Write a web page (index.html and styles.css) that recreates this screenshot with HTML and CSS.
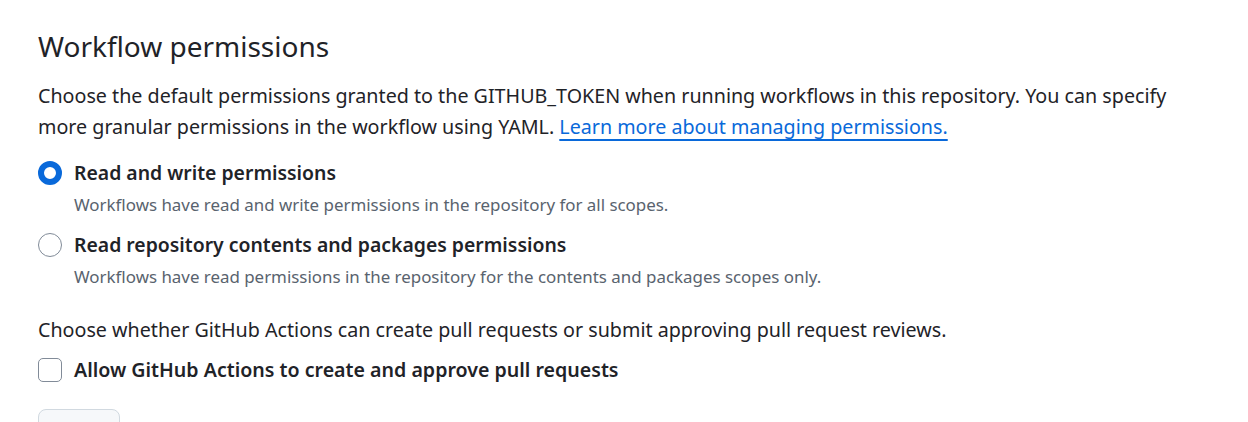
FILE: index.html
```html
<!DOCTYPE html>
<html>
<head>
<meta charset="utf-8">
<link rel="stylesheet" href="styles.css">
</head>
<body>
<main class="page">
  <h2 class="title">Workflow permissions</h2>
  <p class="intro">Choose the default permissions granted to the GITHUB_TOKEN when running workflows in this repository. You can specify more granular permissions in the workflow using YAML. <a class="link" href="#">Learn more about managing permissions.</a></p>

  <div class="options">
    <label class="option">
      <span class="radio radio-checked"></span>
      <span class="option-body">
        <span class="option-label">Read and write permissions</span>
        <span class="option-note">Workflows have read and write permissions in the repository for all scopes.</span>
      </span>
    </label>
    <label class="option">
      <span class="radio"></span>
      <span class="option-body">
        <span class="option-label">Read repository contents and packages permissions</span>
        <span class="option-note">Workflows have read permissions in the repository for the contents and packages scopes only.</span>
      </span>
    </label>
  </div>

  <p class="intro second">Choose whether GitHub Actions can create pull requests or submit approving pull request reviews.</p>

  <label class="check-row">
    <span class="checkbox"></span>
    <span class="option-label check-label">Allow GitHub Actions to create and approve pull requests</span>
  </label>

  <div class="actions">
    <button class="btn">Save</button>
  </div>
</main>
</body>
</html>
```

FILE: styles.css
```css
html, body {
  margin: 0;
  padding: 0;
  background: #ffffff;
}

body {
  font-family: "Noto Sans", "Open Sans", "Liberation Sans", sans-serif;
  color: #1f2328;
  overflow: hidden;
}

.page {
  padding: 24px 0 0 38px;
  width: 1145px;
}

.title {
  margin: 0;
  font-size: 28px;
  font-weight: 400;
  line-height: 44px;
}

.intro {
  margin: 12px 0 0 0;
  font-size: 19.7px;
  line-height: 31px;
}

.link {
  color: #0969da;
  text-decoration: underline;
  text-decoration-thickness: 2px;
  text-underline-offset: 5px;
}

.options {
  display: flex;
  flex-direction: column;
  gap: 8px;
  margin-top: 14px;
}

.option {
  display: flex;
  align-items: flex-start;
  gap: 12px;
}

.radio {
  flex: none;
  width: 24px;
  height: 24px;
  box-sizing: border-box;
  border-radius: 50%;
  border: 1px solid #818b98;
  margin-top: 5px;
}

.radio-checked {
  border: 6px solid #0969da;
}

.option-body {
  display: flex;
  flex-direction: column;
}

.option-label {
  font-size: 19.4px;
  font-weight: 600;
  line-height: 34px;
}

.check-label {
  font-size: 19.6px;
}

.option-note {
  font-size: 16.9px;
  line-height: 30px;
  color: #59636e;
}

.second {
  margin-top: 22px;
}

.check-row {
  display: flex;
  align-items: center;
  gap: 12px;
  margin-top: 8px;
}

.checkbox {
  flex: none;
  width: 24px;
  height: 24px;
  box-sizing: border-box;
  border: 1px solid #818b98;
  border-radius: 5px;
}

.actions {
  margin-top: 22px;
}

.btn {
  width: 82px;
  height: 46px;
  border: 1px solid #d1d9e0;
  border-radius: 8px;
  background: #f6f8fa;
  color: #1f2328;
  font-family: inherit;
  font-size: 19.4px;
  font-weight: 500;
  padding: 12px 0 0 0;
}
```
